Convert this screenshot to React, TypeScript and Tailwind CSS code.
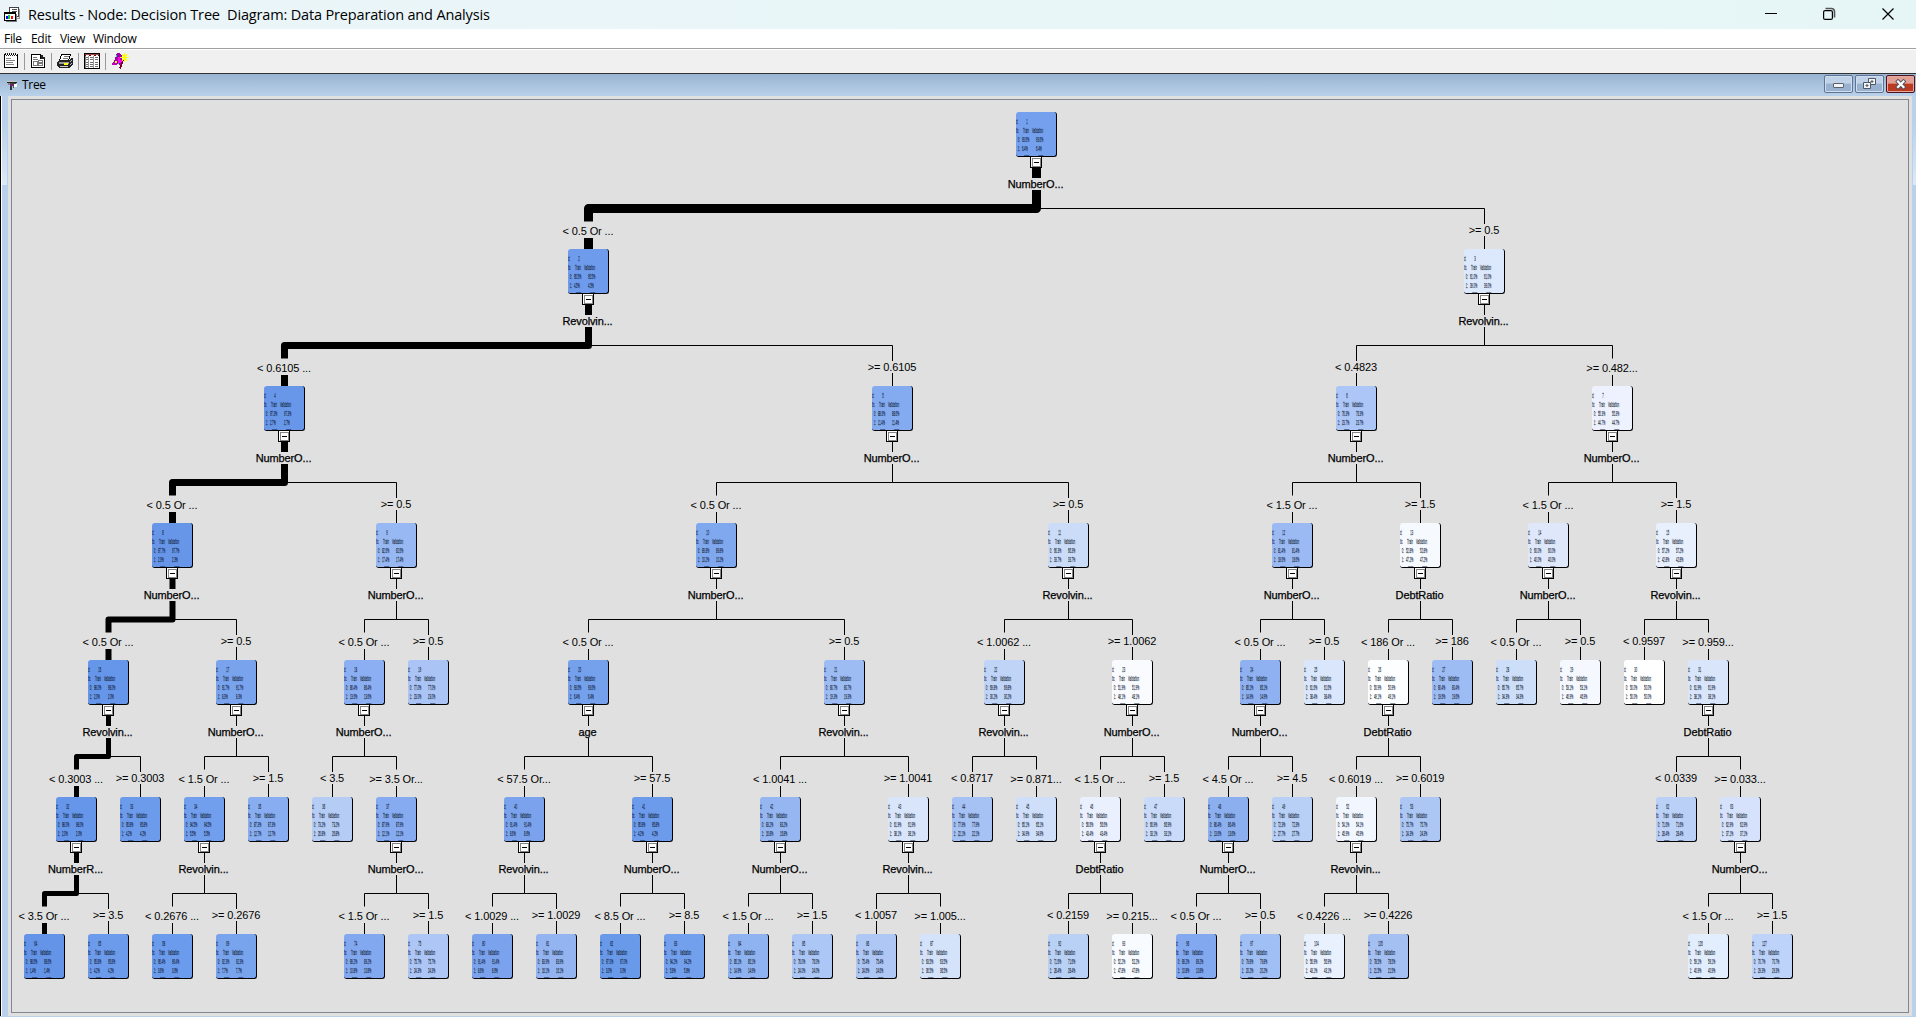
import React from "react";

type TreeNode = {
  id: number;
  slot: number;
  fill: string;
  split?: string;
  rule?: string;
};

const SLOT = 32;
const LEVEL = 137;
const X0 = 32;
const Y0 = 12;

const NODES: TreeNode[] = [
  { id: 1, slot: 31, fill: "#74a0ee", split: "NumberO..." },
  { id: 2, slot: 17, fill: "#6e9bec", split: "Revolvin...", rule: "< 0.5 Or ..." },
  { id: 3, slot: 45, fill: "#dce8fb", split: "Revolvin...", rule: ">= 0.5" },
  { id: 4, slot: 7.5, fill: "#6897e9", split: "NumberO...", rule: "< 0.6105 ..." },
  { id: 5, slot: 26.5, fill: "#84abf0", split: "NumberO...", rule: ">= 0.6105" },
  { id: 6, slot: 41, fill: "#abc6f7", split: "NumberO...", rule: "< 0.4823" },
  { id: 7, slot: 49, fill: "#eef2fe", split: "NumberO...", rule: ">= 0.482..." },
  { id: 8, slot: 4, fill: "#6796e9", split: "NumberO...", rule: "< 0.5 Or ..." },
  { id: 9, slot: 11, fill: "#97b8f3", split: "NumberO...", rule: ">= 0.5" },
  { id: 10, slot: 21, fill: "#80a8ef", split: "NumberO...", rule: "< 0.5 Or ..." },
  { id: 11, slot: 32, fill: "#cbdcf8", split: "Revolvin...", rule: ">= 0.5" },
  { id: 12, slot: 39, fill: "#9bbaf4", split: "NumberO...", rule: "< 1.5 Or ..." },
  { id: 13, slot: 43, fill: "#f6f9fe", split: "DebtRatio", rule: ">= 1.5" },
  { id: 14, slot: 47, fill: "#dfe8fb", split: "NumberO...", rule: "< 1.5 Or ..." },
  { id: 15, slot: 51, fill: "#e8effd", split: "Revolvin...", rule: ">= 1.5" },
  { id: 16, slot: 2, fill: "#6696ea", split: "Revolvin...", rule: "< 0.5 Or ..." },
  { id: 17, slot: 6, fill: "#7aa3ee", split: "NumberO...", rule: ">= 0.5" },
  { id: 18, slot: 10, fill: "#8baff2", split: "NumberO...", rule: "< 0.5 Or ..." },
  { id: 19, slot: 12, fill: "#a9c4f5", rule: ">= 0.5" },
  { id: 20, slot: 17, fill: "#74a0ec", split: "age", rule: "< 0.5 Or ..." },
  { id: 21, slot: 25, fill: "#9dbcf4", split: "Revolvin...", rule: ">= 0.5" },
  { id: 22, slot: 30, fill: "#c0d4f7", split: "Revolvin...", rule: "< 1.0062 ..." },
  { id: 23, slot: 34, fill: "#f9fbff", split: "NumberO...", rule: ">= 1.0062" },
  { id: 24, slot: 38, fill: "#8fb1f2", split: "NumberO...", rule: "< 0.5 Or ..." },
  { id: 25, slot: 40, fill: "#dae6fb", rule: ">= 0.5" },
  { id: 26, slot: 42, fill: "#fcfeff", split: "DebtRatio", rule: "< 186 Or ..." },
  { id: 27, slot: 44, fill: "#9ebcf4", rule: ">= 186" },
  { id: 28, slot: 46, fill: "#cddef9", rule: "< 0.5 Or ..." },
  { id: 29, slot: 48, fill: "#f5f9ff", rule: ">= 0.5" },
  { id: 30, slot: 50, fill: "#ffffff", rule: "< 0.9597" },
  { id: 31, slot: 52, fill: "#d9e5fb", split: "DebtRatio", rule: ">= 0.959..." },
  { id: 32, slot: 1, fill: "#6696ea", split: "NumberR...", rule: "< 0.3003 ..." },
  { id: 33, slot: 3, fill: "#6d9bec", rule: ">= 0.3003" },
  { id: 34, slot: 5, fill: "#719eed", split: "Revolvin...", rule: "< 1.5 Or ..." },
  { id: 35, slot: 7, fill: "#88adf0", rule: ">= 1.5" },
  { id: 36, slot: 9, fill: "#b5ccf5", rule: "< 3.5" },
  { id: 37, slot: 11, fill: "#86abf1", split: "NumberO...", rule: ">= 3.5 Or..." },
  { id: 40, slot: 15, fill: "#7ba3ed", split: "Revolvin...", rule: "< 57.5 Or..." },
  { id: 41, slot: 19, fill: "#6d9bec", split: "NumberO...", rule: ">= 57.5" },
  { id: 42, slot: 23, fill: "#95b6f1", split: "NumberO...", rule: "< 1.0041 ..." },
  { id: 43, slot: 27, fill: "#d9e5fb", split: "Revolvin...", rule: ">= 1.0041" },
  { id: 44, slot: 29, fill: "#a6c1f4", rule: "< 0.8717" },
  { id: 45, slot: 31, fill: "#cfdff9", rule: ">= 0.871..." },
  { id: 46, slot: 33, fill: "#eaf0fd", split: "DebtRatio", rule: "< 1.5 Or ..." },
  { id: 47, slot: 35, fill: "#c9dbf9", rule: ">= 1.5" },
  { id: 48, slot: 37, fill: "#8bafef", split: "NumberO...", rule: "< 4.5 Or ..." },
  { id: 49, slot: 39, fill: "#b8cff6", rule: ">= 4.5" },
  { id: 52, slot: 41, fill: "#f2f6ff", split: "Revolvin...", rule: "< 0.6019 ..." },
  { id: 53, slot: 43, fill: "#adc7f5", rule: ">= 0.6019" },
  { id: 62, slot: 51, fill: "#bad0f7", rule: "< 0.0339" },
  { id: 63, slot: 53, fill: "#d6e2fb", split: "NumberO...", rule: ">= 0.033..." },
  { id: 64, slot: 0, fill: "#6494e8", rule: "< 3.5 Or ..." },
  { id: 65, slot: 2, fill: "#6d9bec", rule: ">= 3.5" },
  { id: 68, slot: 4, fill: "#6b9bec", rule: "< 0.2676 ..." },
  { id: 69, slot: 6, fill: "#78a3ed", rule: ">= 0.2676" },
  { id: 74, slot: 10, fill: "#82a8ef", rule: "< 1.5 Or ..." },
  { id: 75, slot: 12, fill: "#adc6f6", rule: ">= 1.5" },
  { id: 80, slot: 14, fill: "#7ba3ed", rule: "< 1.0029 ..." },
  { id: 81, slot: 16, fill: "#93b4f1", rule: ">= 1.0029" },
  { id: 82, slot: 18, fill: "#699aea", rule: "< 8.5 Or ..." },
  { id: 83, slot: 20, fill: "#72a0ed", rule: ">= 8.5" },
  { id: 84, slot: 22, fill: "#8fb3f1", rule: "< 1.5 Or ..." },
  { id: 85, slot: 24, fill: "#acc7f5", rule: ">= 1.5" },
  { id: 86, slot: 26, fill: "#aec7f4", rule: "< 1.0057" },
  { id: 87, slot: 28, fill: "#d4e2fa", rule: ">= 1.005..." },
  { id: 92, slot: 32, fill: "#bad1f6", rule: "< 0.2159" },
  { id: 93, slot: 34, fill: "#f8fbff", rule: ">= 0.215..." },
  { id: 96, slot: 36, fill: "#82a8f0", rule: "< 0.5 Or ..." },
  { id: 97, slot: 38, fill: "#a0bff4", rule: ">= 0.5" },
  { id: 104, slot: 40, fill: "#e9f0fe", rule: "< 0.4226 ..." },
  { id: 105, slot: 42, fill: "#a4c0f3", rule: ">= 0.4226" },
  { id: 126, slot: 52, fill: "#e2edfd", rule: "< 1.5 Or ..." },
  { id: 127, slot: 54, fill: "#bdd3f9", rule: ">= 1.5" },
];

const BY_ID = new Map(NODES.map((n) => [n.id, n]));
const TRUNK: Record<number, number> = { 1: 9, 2: 7, 4: 7, 8: 6, 16: 5, 32: 5 };

const depthOf = (n: TreeNode) => Math.floor(Math.log2(n.id));
const xOf = (n: TreeNode) => X0 + n.slot * SLOT;
const yOf = (n: TreeNode) => Y0 + depthOf(n) * LEVEL;
const isLong = (s: string) => s.endsWith("...");

function Edges() {
  return (
    <svg width="1896" height="912" className="absolute left-0 top-0" fill="none" stroke="#000" strokeLinejoin="round">
      {[...NODES].reverse().filter((n) => n.split).map((n) => {
        const x = xOf(n) + 0.5;
        const y = yOf(n);
        const bar = y + 96.5;
        const w = TRUNK[n.id] ?? 1;
        const kids = [BY_ID.get(n.id * 2 + 1)!, BY_ID.get(n.id * 2)!];
        return (
          <g key={n.id}>
            <path d={`M${x} ${y + 56}V${y + 66}`} strokeWidth={w} />
            {kids.map((k) => {
              const kx = xOf(k) + 0.5;
              const ky = yOf(k);
              const kw = k.id % 2 === 0 ? w : 1;
              const long = isLong(k.rule!);
              return (
                <g key={k.id} strokeWidth={kw}>
                  <path d={`M${x} ${y + 78}V${bar}H${kx}V${ky - (long ? 27.5 : 25)}`} />
                  <path d={`M${kx} ${ky - (long ? 11 : 13)}V${ky}`} />
                </g>
              );
            })}
          </g>
        );
      })}
    </svg>
  );
}

/* Node statistics are set at full width and condensed to fit the 40px tile. */
function Stats({ node }: { node: TreeNode }) {
  const red = parseInt(node.fill.slice(1, 3), 16);
  const good = Math.min(98.7, 50 + ((255 - red) / 155) * 48.6);
  const t0 = good.toFixed(1) + "%";
  const t1 = (100 - good).toFixed(1) + "%";
  return (
    <div className="h-11 w-[108px] origin-left scale-x-[0.37] pt-[5px] text-[7px] leading-[9px] text-[#0c1730]/80 [-webkit-text-stroke:0.35px_#0c173099]">
      <div className="flex">
        <span className="w-[28px]">d:</span>
        <span>{node.id}</span>
      </div>
      <div className="flex">
        <span className="w-[19px]">tic</span>
        <span className="w-[24px]">Train</span>
        <span>Validation</span>
      </div>
      <div className="flex pl-[5px]">
        <span className="w-[11px]">0:</span>
        <span className="w-[38px]">{t0}</span>
        <span>{t0}</span>
      </div>
      <div className="flex pl-[5px]">
        <span className="w-[11px]">1:</span>
        <span className="w-[38px]">{t1}</span>
        <span>{t1}</span>
      </div>
      <div className="flex gap-[24px] pl-[22px] pt-[2px]">
        <div className="h-px w-[14px] bg-[#0c1730]/50" />
        <div className="h-px w-[14px] bg-[#0c1730]/50" />
      </div>
    </div>
  );
}

function Toggle({ x, y }: { x: number; y: number }) {
  return (
    <svg className="absolute size-3" style={{ left: x, top: y }} viewBox="0 0 12 12" shapeRendering="crispEdges">
      <rect x="0.5" y="0.5" width="11" height="11" fill="#fff" stroke="#000" />
      <rect x="2.5" y="2.5" width="8" height="8" fill="#fff" stroke="#858585" />
      <path d="M4 6.5h5" stroke="#000" />
    </svg>
  );
}

const LABEL =
  "absolute w-20 -translate-x-1/2 whitespace-nowrap text-center text-[11px] leading-[14px] tracking-[-0.12px]";

function Node({ node }: { node: TreeNode }) {
  const x = xOf(node);
  const y = yOf(node);
  return (
    <>
      {node.rule && (
        <span className={LABEL} style={{ left: x, top: y - (isLong(node.rule) ? 25 : 26) }}>
          {node.rule}
        </span>
      )}
      <div
        className="absolute h-[45px] w-[41px] overflow-hidden rounded-[3px] border-b border-r border-black"
        style={{ left: x - 20, top: y, backgroundColor: node.fill }}
      >
        <Stats node={node} />
      </div>
      {node.split && (
        <>
          <Toggle x={x - 6} y={y + 44} />
          <span className={LABEL + " [-webkit-text-stroke:0.25px_black]"} style={{ left: x - 0.5, top: y + 65 }}>
            {node.split}
          </span>
        </>
      )}
    </>
  );
}

function AppIcon() {
  return (
    <svg width="16" height="16" viewBox="0 0 16 16" shapeRendering="crispEdges">
      <path d="M5.500.5h9v9h-9z" fill="#fff" stroke="#444" />
      <path d="M8 2.500h5M8 4.500h5" stroke="#555" />
      <path d="M15.500 2v9H13" fill="none" stroke="#999" />
      <path d="M.5 5.500h11v8H.5z" fill="#fff" stroke="#000" />
      <path d="M0 6.500h12" stroke="#000" />
      <path d="M2 14.500h10.500V7" fill="none" stroke="#777" />
      <path d="M2 9h2v3H2z" fill="#00f" />
      <path d="M4 8h2v4H4z" fill="#0c4" />
      <path d="M7 9h2v3H7z" fill="#f00" />
    </svg>
  );
}

function NotesIcon() {
  return (
    <svg width="15" height="16" viewBox="0 0 15 16" shapeRendering="crispEdges">
      <path d="M.5 1.500h13v13H.5z" fill="#fff" stroke="#000" />
      <path d="M2 1.500h1m1 0h1m1 0h1m1 0h1m1 0h1m1 0h1" stroke="#fff" />
      <path d="M1 .5h1m1 0h1m1 0h1m1 0h1m1 0h1m1 0h1M2 2.500h1m1 0h1m1 0h1m1 0h1m1 0h1m1 0h1" stroke="#222" />
      <path d="M2 5.500h5M2 7.500h9M2 9.500h7M2 11.500h8" stroke="#888" />
    </svg>
  );
}

function ReportIcon() {
  return (
    <svg width="15" height="16" viewBox="0 0 15 16" shapeRendering="crispEdges">
      <path d="M.5 1.500h9l4 4v9H.5z" fill="#fff" stroke="#000" />
      <path d="M9.500 1v4.500H14" fill="none" stroke="#000" />
      <path d="M10 2h2v2h2v2h-4z" fill="#222" />
      <path d="M2 4.500h4M2 6.500h5" stroke="#777" />
      <path d="M7.500 7.500h4v2h-4zM2.500 8.500h4v4h-4zM7.500 10.500h4v2h-4z" fill="none" stroke="#777" />
    </svg>
  );
}

function PrinterIcon() {
  return (
    <svg width="17" height="16" viewBox="0 0 17 16" shapeRendering="crispEdges">
      <path d="M5 1h9l-3 7H2z" fill="#fff" stroke="#000" />
      <path d="M7 3.500h5M6 5.500h5" stroke="#777" />
      <path d="M1 8l2-1h9l3-2 1 1v5l-3 4H2l-2-2V9z" fill="#222" />
      <path d="M2 9h10v2H2z" fill="#999" />
      <path d="M7 10h4v1.500H7z" fill="#ff0" />
      <path d="M3 13h8v1H3z" fill="#ccc" />
      <path d="M13 9l2-2M13 12l2-2" stroke="#bbb" />
    </svg>
  );
}

function TableIcon() {
  return (
    <svg width="16" height="16" viewBox="0 0 16 16" shapeRendering="crispEdges">
      <path d="M.5.5h15v15H.5z" fill="#fff" stroke="#000" />
      <path d="M1 1.500h14" stroke="#a04040" />
      <path d="M1 2.500h1m3 0h2m3 0h2m2 0h1" stroke="#800000" />
      <path d="M4.500 3v12M9.500 3v12" stroke="#999" />
      <path d="M2 4.500h2m2 0h3m2 0h3M2 6.500h2m2 0h3m2 0h3M2 9.500h2m2 0h3m2 0h3M2 11.500h2m2 0h3m2 0h3M2 13.500h2m2 0h3m2 0h3" stroke="#707070" />
      <path d="M1.500 3v12" stroke="#888" />
    </svg>
  );
}

function WizardIcon() {
  return (
    <svg width="17" height="17" viewBox="0 0 17 17" shapeRendering="crispEdges">
      <path d="M5 0h3l2 3 1 7-3 2-5-2-3 1 2-3z" fill="#a000a0" />
      <path d="M6 4h2v3h2v3H6z" fill="#f0f" />
      <path d="M0 10l3-1 3 2-2 1H0z" fill="#c000c0" />
      <path d="M3 8h2v2H3z" fill="#ff0" />
      <path d="M4 2h1v2H4zM6 10h1v1H6z" fill="#0cc" />
      <path d="M11.500 6L8 15.500" stroke="#800020" strokeWidth="1.600" />
      <path d="M12.500 0v9M8 4.500h9M10 1l5 7M15 1l-5 7" stroke="#ff0" strokeWidth="1.200" />
    </svg>
  );
}

function TreeIcon() {
  return (
    <svg width="10" height="9" viewBox="0 0 10 9" shapeRendering="crispEdges">
      <path d="M0 0h10v1H0z" fill="#c8c8c8" />
      <path d="M0 1h10v1H0z" fill="#222" />
      <path d="M6 3h4v3H6z" fill="#fff" />
      <path d="M1 2h2v2H1z" fill="#888" />
      <path d="M3 2h6v1H3z" fill="#444" />
      <path d="M3 3h4v2H3z" fill="#702070" />
      <path d="M3 5h2v4H3z" fill="#333" />
      <path d="M6 5h1v2H6z" fill="#555" />
    </svg>
  );
}

const TOOLS = [
  { name: "notes", Icon: NotesIcon, cell: "w-5" },
  { name: "report", Icon: ReportIcon, cell: "ml-[6px] w-5" },
  { name: "print", Icon: PrinterIcon, cell: "ml-[5px] w-[21px]" },
  { name: "table", Icon: TableIcon, cell: "ml-[5px] w-[21px]" },
  { name: "wizard", Icon: WizardIcon, cell: "ml-[6px]" },
];

const FRAME_BTN =
  "flex h-[18px] w-[29px] items-center justify-center rounded-[2px] border border-[#5f7493] bg-linear-to-b from-[#bfd2e8] from-45% to-[#98b2d0] to-50% shadow-[inset_0_0_0_1px_#cfdef0]";

function SideRail({ side }: { side: "left" | "right" }) {
  return (
    <div className={side === "left" ? "flex w-2 shrink-0" : "flex w-1 shrink-0"}>
      {side === "left" && <div className="w-px bg-black" />}
      {side === "left" && <div className="w-px bg-white" />}
      {side === "right" && <div className="w-px bg-[#b9d1ea]" />}
      <div className="flex flex-1 flex-col bg-[#b9d1ea]">
        <div className="h-[89px] bg-linear-to-b from-[#b9d1ea] from-30% to-[#dde9f6]" />
      </div>
      {side === "left" && <div className="w-px bg-[#b9d1ea]" />}
    </div>
  );
}

export default function App() {
  return (
    <div className="flex h-[1017px] w-[1916px] flex-col overflow-hidden bg-[#b9d1ea] font-['Liberation_Sans',Arial,sans-serif] text-black">
      <header className="flex h-[29px] shrink-0 items-center justify-between bg-linear-to-r from-[#ebf5f9] to-[#e6f6f6] pl-1">
        <div className="flex items-center gap-2">
          <AppIcon />
          <h1 className="whitespace-pre font-['Open_Sans',sans-serif] text-[14.5px] leading-[29px] tracking-[-0.16px]">
            {"Results - Node: Decision Tree  Diagram: Data Preparation and Analysis"}
          </h1>
        </div>
        <div className="flex">
          <svg width="180" height="29" fill="none" stroke="#000" strokeWidth="1.2">
            <path d="M29 13.500h12" shapeRendering="crispEdges" />
            <path d="M89.500 8.500h6a3 3 0 0 1 3 3v6" stroke="#555" strokeWidth="1.600" />
            <rect x="87.600" y="10.600" width="8.800" height="8.800" rx="1.500" />
            <path d="M146.500 8.500l11 11M157.500 8.500l-11 11" />
          </svg>
        </div>
      </header>

      <nav className="flex h-[19px] shrink-0 items-center bg-white pl-1 font-['Open_Sans',sans-serif] text-[12px] leading-[19px] tracking-[-0.3px]">
        <span className="w-[27px]">File</span>
        <span className="w-[29px]">Edit</span>
        <span className="w-[33px]">View</span>
        <span>Window</span>
      </nav>

      <div className="flex h-[26px] shrink-0 items-center border-b border-t border-b-[#333] border-t-[#a0a0a0] bg-[#f0f0f0] pl-1 shadow-[inset_0_1px_0_#fff]">
        {TOOLS.map(({ name, Icon, cell }, i) => (
          <React.Fragment key={name}>
            {i > 0 && <div className="h-[17px] w-px bg-[#999]" />}
            <div className={cell}>
              <Icon />
            </div>
          </React.Fragment>
        ))}
      </div>

      <div className="flex h-[22px] shrink-0 items-center justify-between bg-linear-to-b from-[#99b4d1] to-[#b9d1ea] pl-[7px]">
        <div className="flex items-center gap-[5px]">
          <TreeIcon />
          <span className="font-['Open_Sans',sans-serif] text-[12px] leading-[22px] tracking-[-0.3px]">Tree</span>
        </div>
        <div className="flex gap-[2px] self-start pr-px pt-px">
          <div className={FRAME_BTN}>
            <div className="mt-[3px] h-[5px] w-[11px] rounded-[1px] border border-[#5a6270] bg-[#f4f4f4]" />
          </div>
          <div className={FRAME_BTN}>
            <svg width="13" height="12" fill="#f4f4f4" stroke="#4f5866">
              <path d="M5.500.5h7v6h-7z" />
              <path d="M8 3h2v1H8z" fill="#8ea6c4" />
              <path d="M.5 4.500h7v6h-7z" />
              <path d="M3 7h2v1H3z" fill="#8ea6c4" />
            </svg>
          </div>
          <div className="flex h-[18px] w-[29px] items-center justify-center rounded-[2px] border border-[#4d1420] bg-linear-to-b from-[#e2a095] from-45% to-[#bb3a22] to-50% shadow-[inset_0_0_0_1px_#e3aa9f]">
            <svg width="12" height="11" strokeLinecap="square">
              <path d="M3 2.500l5.500 5.500M8.500 2.500l-5.500 5.500" stroke="#4d5361" strokeWidth="4" />
              <path d="M3 2.500l5.500 5.500M8.500 2.500l-5.500 5.500" stroke="#fff" strokeWidth="2.200" />
            </svg>
          </div>
        </div>
      </div>

      <div className="flex h-[920px] shrink-0">
        <SideRail side="left" />
        <main className="flex-1 bg-[#e0e0e0] p-[3px]">
          <div className="relative h-[914px] w-[1898px] overflow-hidden border border-[#82868f] bg-[#e0e0e0]">
            <Edges />
            {NODES.map((n) => (
              <Node key={n.id} node={n} />
            ))}
          </div>
        </main>
        <SideRail side="right" />
      </div>
    </div>
  );
}
